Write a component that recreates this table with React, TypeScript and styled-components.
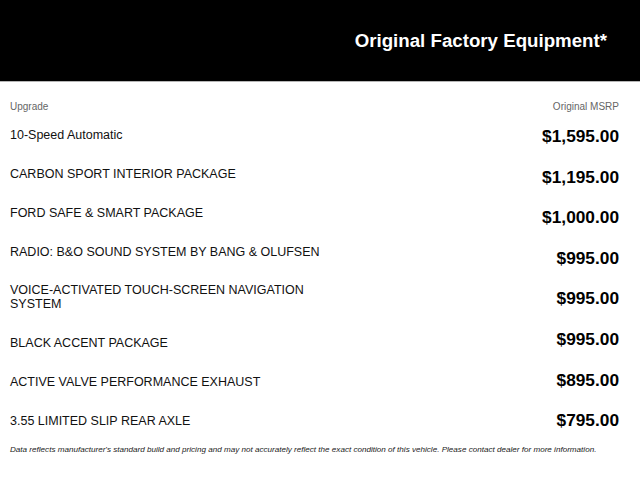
import styled, { createGlobalStyle } from "styled-components";

const GlobalStyle = createGlobalStyle`
  html, body {
    margin: 0;
    padding: 0;
    background: #fff;
  }
  body {
    font-family: "Liberation Sans", Arial, sans-serif;
    color: #111;
  }
`;

const upgrades = [
  { name: "10-Speed Automatic", price: "$1,595.00" },
  { name: "CARBON SPORT INTERIOR PACKAGE", price: "$1,195.00" },
  { name: "FORD SAFE & SMART PACKAGE", price: "$1,000.00" },
  { name: "RADIO: B&O SOUND SYSTEM BY BANG & OLUFSEN", price: "$995.00" },
  { name: "VOICE-ACTIVATED TOUCH-SCREEN NAVIGATION SYSTEM", price: "$995.00" },
  { name: "BLACK ACCENT PACKAGE", price: "$995.00" },
  { name: "ACTIVE VALVE PERFORMANCE EXHAUST", price: "$895.00" },
  { name: "3.55 LIMITED SLIP REAR AXLE", price: "$795.00" },
];

const Page = styled.div`
  width: 640px;
  height: 480px;
  overflow: hidden;
  background: #fff;
`;

const TitleBar = styled.header`
  height: 81px;
  background: #000;
  border-bottom: 1px solid #b5b5b5;
  display: flex;
  align-items: center;
  justify-content: flex-end;
  padding: 0 33px 0 0;
  box-sizing: content-box;
`;

const Title = styled.h1`
  margin: 0;
  color: #fff;
  font-size: 18.7px;
  font-weight: 700;
  line-height: 22px;
`;

const Content = styled.section`
  padding: 19px 21px 0 10px;
`;

const ColumnHeads = styled.div`
  display: flex;
  justify-content: space-between;
  font-size: 10px;
  line-height: 12px;
  color: #666;
`;

const Columns = styled.div`
  display: flex;
  justify-content: space-between;
  align-items: flex-start;
  margin-top: 12px;
`;

const Names = styled.ul`
  list-style: none;
  margin: 0;
  padding: 3px 0 0;
  width: 320px;
  display: flex;
  flex-direction: column;
  gap: 24.85px;
`;

const Name = styled.li`
  font-size: 12.5px;
  line-height: 14px;
  color: #111;
`;

const Prices = styled.ul`
  list-style: none;
  margin: 0;
  padding: 1px 0 0;
  display: flex;
  flex-direction: column;
  align-items: flex-end;
  gap: 20.6px;
`;

const Price = styled.li`
  font-size: 17.3px;
  font-weight: 700;
  line-height: 20px;
  color: #000;
`;

const Disclaimer = styled.p`
  margin: 15px 0 0;
  font-size: 8.1px;
  line-height: 10px;
  font-style: italic;
  color: #222;
`;

export default function App() {
  return (
    <Page>
      <GlobalStyle />
      <TitleBar>
        <Title>Original Factory Equipment*</Title>
      </TitleBar>
      <Content>
        <ColumnHeads>
          <span>Upgrade</span>
          <span>Original MSRP</span>
        </ColumnHeads>
        <Columns>
          <Names>
            {upgrades.map((u) => (
              <Name key={u.name}>{u.name}</Name>
            ))}
          </Names>
          <Prices>
            {upgrades.map((u) => (
              <Price key={u.name}>{u.price}</Price>
            ))}
          </Prices>
        </Columns>
        <Disclaimer>
          Data reflects manufacturer's standard build and pricing and may not
          accurately reflect the exact condition of this vehicle. Please contact
          dealer for more information.
        </Disclaimer>
      </Content>
    </Page>
  );
}
